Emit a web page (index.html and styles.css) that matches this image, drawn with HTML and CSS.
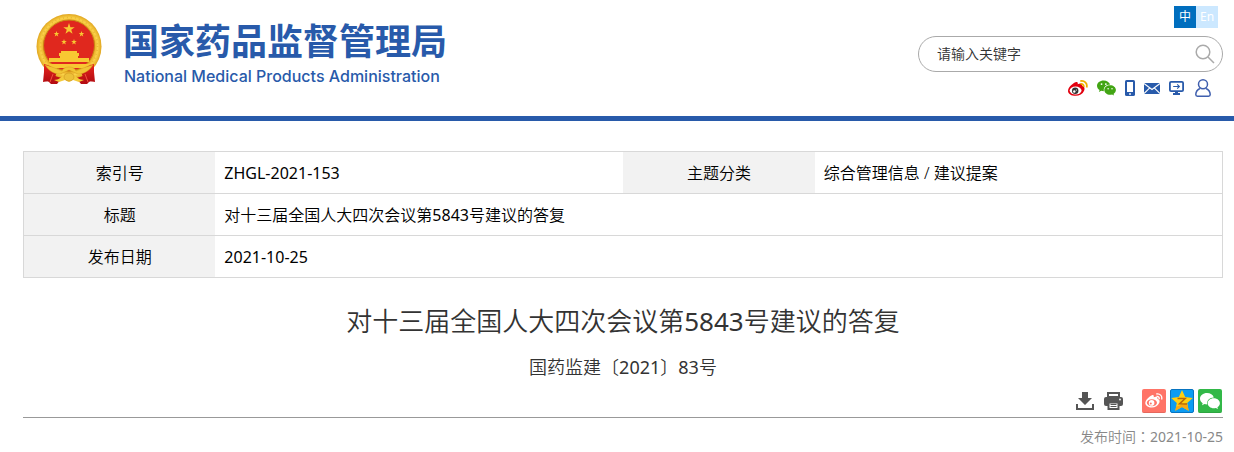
FILE: index.html
```html
<!DOCTYPE html>
<html lang="zh-CN">
<head>
<meta charset="utf-8">
<meta name="viewport" content="width=device-width, initial-scale=1">
<title>对十三届全国人大四次会议第5843号建议的答复</title>
<link rel="stylesheet" href="styles.css">
</head>
<body>
<svg class="defs" width="0" height="0" aria-hidden="true">
  <symbol id="star" viewBox="-10 -10 20 20"><path d="M0-10 2.3-3.1H9.5L3.7 1.2 5.9 8.1 0 3.8-5.9 8.1-3.7 1.2-9.5-3.1H-2.3Z"/></symbol>
  <symbol id="wechat" viewBox="0 0 20 16">
    <path d="M7 0C3.1 0 0 2.500 0 5.700c0 1.900 1 3.400 2.700 4.500L2 12.300l2.500-1.300c.9.300 1.700.4 2.700.4C6.600 7.300 9.400 4.500 13.800 4.400 13.100 1.800 10.300 0 7 0Z"/>
    <path d="M13.800 5.200c-3.400 0-6.100 2.200-6.100 5s2.700 5 6.100 5c.7 0 1.400-.1 2-.3l2.200 1.100-.6-1.800c1.500-.9 2.500-2.400 2.500-4 0-2.800-2.700-5-6.100-5Z"/>
    <g class="eyes"><circle cx="4.800" cy="3.900" r="1"/><circle cx="9.300" cy="3.900" r="1"/><circle cx="11.700" cy="8.700" r=".8"/><circle cx="15.800" cy="8.700" r=".8"/></g>
  </symbol>
</svg>

<header class="header">
  <a class="brand" href="#">
    <svg class="emblem" viewBox="0 0 66 70" role="img" aria-label="国徽">
      <defs>
        <radialGradient id="gold" cx=".5" cy=".5" r=".5"><stop offset=".76" stop-color="#e3a11c"/><stop offset=".88" stop-color="#fbd34a"/><stop offset="1" stop-color="#e0a51f"/></radialGradient>
        <linearGradient id="cloth" x1="0" y1="0" x2="0" y2="1"><stop offset="0" stop-color="#e8251d"/><stop offset="1" stop-color="#b30c12"/></linearGradient>
      </defs>
      <path d="M9 48 7 68l5-1 3 3h6l4-5h16l4 5h6l3-3 5 1-2-20Z" fill="url(#cloth)"/>
      <circle cx="33" cy="32.500" r="32.500" fill="url(#gold)"/>
      <circle cx="33" cy="32" r="28.500" fill="none" stroke="#d29318" stroke-width="1.500" stroke-dasharray="1 3" opacity=".4"/>
      <circle cx="33" cy="31.500" r="25.500" fill="#e0281e" stroke="#c98714"/>
      <g fill="#f8c832">
        <use href="#star" x="27" y="9" width="12" height="12"/>
        <use href="#star" x="17.500" y="17" width="6" height="6"/><use href="#star" x="42.500" y="17" width="6" height="6"/>
        <use href="#star" x="25" y="25" width="6" height="6"/><use href="#star" x="35" y="25" width="6" height="6"/>
        <path d="M25 37h16v2h2v3h-1v2h11v4H13v-4h11v-2h-1v-3h2Z"/>
        <path d="M12 50h42l-3 4H15Z"/>
      </g>
      <path d="M8 50c5 1 9 3 13 8l-4 10-9-1Zm50 0c-5 1-9 3-13 8l4 10 9-1Z" fill="url(#cloth)"/>
      <path d="M9 51c8 2 12 4 17 6 1-3 4-4 7-4s6 1 7 4c5-2 9-4 17-6-4 6-9 9-15 9l-9-4-9 4c-6 0-11-3-15-9Z" fill="#f1c434" stroke="#d79c20" stroke-width=".5"/>
      <path d="M18 66c5 0 7-3 10-5h10c3 2 5 5 10 5l-5 2-6-2-4 2-4-2-6 2Z" fill="#f4cb3c"/>
      <ellipse cx="33" cy="63" rx="5" ry="4" fill="#ecc039" stroke="#cf9420" stroke-width=".6"/>
      <path d="m17 60-3 8m35-8 3 8" stroke="#f25140"/>
    </svg>
    <span class="brand-text">
      <span class="brand-cn">国家药品监督管理局</span>
      <span class="brand-en">National Medical Products Administration</span>
    </span>
  </a>

  <div class="tools">
    <nav class="langs" aria-label="语言">
      <a class="lang lang-on" href="#">中</a><a class="lang" href="#">En</a>
    </nav>
    <form class="search">
      <input class="search-input" type="text" placeholder="请输入关键字" aria-label="请输入关键字">
      <button class="search-button" type="button" aria-label="搜索">
        <svg width="20" height="20" viewBox="0 0 20 20" fill="none" stroke="#aaa" stroke-width="1.500"><circle cx="8" cy="8" r="6.800"/><path d="m13 13 6 6"/></svg>
      </button>
    </form>
    <nav class="links" aria-label="快捷入口">
      <a href="#" aria-label="微博"><svg width="20" height="16" viewBox="0 0 20 16">
        <path d="M7.500 2.200C9 1.500 10.300 2 9.700 4.200c2.400-1 5-.9 4.400 1.600 2.600.8 2.900 3 2 4.900C14.700 14 11.500 15.800 7.600 15.800 3.500 15.800 0 13.900 0 10.900 0 7.500 4.300 3.500 7.500 2.200Z" fill="#e2000f"/>
        <ellipse cx="7.600" cy="10.500" rx="5.900" ry="4" fill="#fff"/><circle cx="7.200" cy="10.700" r="3.200" fill="#333"/><circle cx="6.300" cy="11.500" r="1.200" fill="#fff"/><circle cx="8.400" cy="10" r=".6" fill="#fff"/>
        <path d="M12.300 1.100c4-1 7.500 2.500 6.300 6.400M12.600 4c1.900-.4 3.600 1 3 3" fill="none" stroke="#eeb000" stroke-width="1.800"/></svg></a>
      <a href="#" aria-label="微信"><svg class="wechat-green" width="19" height="16"><use href="#wechat"/></svg></a>
      <a href="#" aria-label="手机版"><svg width="10" height="16" viewBox="0 0 10 16"><rect width="10" height="16" rx="1.600" fill="#285aaa"/><path d="M2 2h6v10H2Z" fill="#fff"/><circle cx="5" cy="14" r=".9" fill="#fff"/></svg></a>
      <a href="#" aria-label="邮箱"><svg width="16" height="11" viewBox="0 0 16 11"><path d="M0 0h16v11H0Z" fill="#285aaa"/><path d="m0 .5 8 6 8-6M0 10.500l5.500-5.300M16 10.500l-5.500-5.300" fill="none" stroke="#fff" stroke-width="1.100"/></svg></a>
      <a href="#" aria-label="电脑版"><svg width="15" height="14" viewBox="0 0 15 14"><rect x=".9" y=".9" width="13.200" height="9.200" rx="1.200" fill="#fff" stroke="#285aaa" stroke-width="1.800"/><path d="M6 10.500h3V12h2v2H4v-2h2Z" fill="#285aaa"/><path d="M4.200 5.500h6M8.200 3.300l2.200 2.200-2.200 2.200" fill="none" stroke="#285aaa" stroke-width="1.100"/></svg></a>
      <a class="link-user" href="#" aria-label="个人中心"><svg width="16" height="18" viewBox="0 0 16 18" fill="none" stroke="#3f5fae" stroke-width="1.500"><circle cx="8" cy="5.300" r="4.500"/><path d="M4.900 9.500C2.400 10.700.8 13 .8 15.600c0 1 .6 1.600 1.600 1.600h11.200c1 0 1.600-.6 1.600-1.600 0-2.600-1.600-4.900-4.100-6.100"/></svg></a>
    </nav>
  </div>
</header>

<main class="main">
  <table class="info">
    <colgroup><col class="col-key"><col class="col-value"><col class="col-key"><col class="col-value"></colgroup>
    <tbody>
      <tr><th scope="row">索引号</th><td><span class="num">ZHGL-2021-153</span></td><th scope="row">主题分类</th><td>综合管理信息 / 建议提案</td></tr>
      <tr><th scope="row">标题</th><td colspan="3">对十三届全国人大四次会议第<span class="num">5843</span>号建议的答复</td></tr>
      <tr><th scope="row">发布日期</th><td colspan="3"><span class="num">2021-10-25</span></td></tr>
    </tbody>
  </table>

  <h1 class="title">对十三届全国人大四次会议第<span class="num">5843</span>号建议的答复</h1>
  <p class="docno">国药监建〔<span class="num">2021</span>〕<span class="num">83</span>号</p>

  <div class="actions">
    <button class="action" type="button" aria-label="下载"><svg width="18" height="18" viewBox="0 0 18 18" fill="#555"><path d="M6 0h6v6h4l-7 7-7-7h4Z"/><path d="M0 12h2v4h14v-4h2v6H0Z"/></svg></button>
    <button class="action" type="button" aria-label="打印"><svg width="19" height="18" viewBox="0 0 19 18"><path d="M4 1h11v4H4Z" fill="#fff" stroke="#555" stroke-width="2"/><rect y="5" width="19" height="9" rx="2" fill="#555"/><path d="M4.500 10.500h10V17h-10Z" fill="#fff" stroke="#555" stroke-width="2"/><path d="M6.500 12.500h6M6.500 14.500h6" stroke="#555"/><circle cx="16" cy="7.500" r=".9" fill="#fff"/></svg></button>
    <div class="shares">
      <a class="share share-weibo" href="#" aria-label="分享到微博"><svg width="18" height="17" viewBox="0 0 18 17">
        <path d="M7 3.200c1.300-.6 2.200.2 1.700 2 2-.9 4.300-.7 3.700 1.500 2.300.7 2.600 2.600 1.800 4.300C13 13.700 10.200 15.500 6.800 15.500 3.200 15.500.3 13.700.3 11 .3 8 4.300 4.300 7 3.200Z" fill="#fff"/><ellipse cx="6.900" cy="10.700" rx="5.100" ry="3.500" fill="#ff7467"/><circle cx="6.600" cy="10.900" r="2.800" fill="#fff"/><circle cx="5.800" cy="11.500" r="1" fill="#ff7467"/>
        <path d="M11.300 2c3.600-.9 6.300 2.100 5.300 5.500M11.500 4.500c1.700-.3 3.100.9 2.600 2.700" fill="none" stroke="#fff" stroke-width="1.300"/></svg></a>
      <a class="share share-qzone" href="#" aria-label="分享到QQ空间"><svg width="22" height="22" viewBox="0 0 22 22"><path d="m11 0 3.200 7 7.600.9-5.600 5.200 1.500 7.700-6.700-3.800-6.700 3.800 1.500-7.700L.2 7.900 7.800 7Z" fill="#ffd012"/><path d="m7 16 9-3 1.700 7.800L11 17l-6.700 3.800.9-4.300Z" fill="#f8a814"/><path d="M6.500 8.600h7.700l-5.700 5.300 7.500.2" fill="none" stroke="#b96808" stroke-width="1.500"/></svg></a>
      <a class="share share-wechat" href="#" aria-label="分享到微信"><svg class="wechat-white" width="20" height="16"><use href="#wechat"/></svg></a>
    </div>
  </div>
  <p class="time">发布时间<span lang="zh-TW" class="colon">：</span><span class="num">2021-10-25</span></p>
</main>
</body>
</html>
```
FILE: styles.css
```css
* { box-sizing: border-box; }

body {
  margin: 0;
  background: #fff;
  color: #000;
  font-family: "Noto Sans", "Noto Sans CJK SC", sans-serif;
  font-size: 16px;
}

a { text-decoration: none; }
svg { display: block; }
.defs { position: absolute; }

button {
  padding: 0;
  border: 0;
  background: none;
  cursor: pointer;
}

/* Header */
.header {
  display: flex;
  justify-content: space-between;
  align-items: flex-start;
  padding: 6px 11px 19px 36px;
  border-bottom: 5px solid #285aaa;
}

.brand {
  display: flex;
  gap: 21px;
  padding-top: 8px;
  color: #285aaa;
}

.emblem {
  width: 66px;
  height: 70px;
}

.brand-text {
  display: flex;
  flex-direction: column;
  padding-top: 1px;
  white-space: nowrap;
}

.brand-cn {
  font: 700 36px/48px "Noto Sans CJK SC", sans-serif;
}

.brand-en {
  padding-left: 1px;
  font: 500 16px/26px Inter, sans-serif;
}

.tools {
  display: flex;
  flex-direction: column;
  align-items: flex-end;
}

.langs {
  display: flex;
  padding-right: 5px;
}

.lang {
  width: 22px;
  background: #cce8ff;
  color: #fff;
  font-size: 12px;
  line-height: 22px;
  text-align: center;
}

.lang-on { background: #006ebe; }

.search {
  display: flex;
  align-items: center;
  width: 305px;
  height: 36px;
  margin-top: 8px;
  padding: 0 7px 0 18px;
  border: 1px solid #aaa;
  border-radius: 18px;
}

.search-input {
  flex: 1;
  min-width: 0;
  padding: 0;
  border: 0;
  outline: 0;
  background: none;
  color: #333;
  font: 350 14px/20px "Noto Sans", "Noto Sans CJK SC", sans-serif;
}

.search-input::placeholder { color: #333; opacity: 1; }

.links {
  display: flex;
  align-items: center;
  gap: 9px;
  padding: 7px 12px 0 0;
}

.link-user { padding-left: 2px; }

.wechat-green { fill: #42a514; }
.wechat-white { fill: #fff; }
.eyes { fill: #fff; }
.share .eyes { fill: #32b848; }

/* Document details */
.main {
  padding: 30px 11px 0 23px;
  font-weight: 350;
}

.num { font-weight: 400; }

.info {
  width: 100%;
  border: 1px solid #d8d8d8;
  border-collapse: collapse;
  table-layout: fixed;
}

.col-key { width: 16%; }
.col-value { width: 34%; }

.info th,
.info td {
  height: 42px;
  padding: 0 9px;
  border-top: 1px solid #d8d8d8;
  font-weight: 350;
  line-height: 24px;
  text-align: left;
}

.info th {
  background: #f2f2f2;
  text-align: center;
}

.title {
  margin: 23px 0 0;
  color: #333;
  font-size: 26px;
  font-weight: 350;
  line-height: 40px;
  text-align: center;
}

.docno {
  margin: 12px 0 0;
  color: #333;
  font-size: 18px;
  line-height: 28px;
  text-align: center;
}

.actions {
  display: flex;
  justify-content: flex-end;
  align-items: center;
  gap: 10px;
  padding: 8px 1px 4px 0;
  border-bottom: 1px solid #999;
}

.shares {
  display: flex;
  gap: 4px;
  padding-left: 9px;
}

.share {
  display: grid;
  place-items: center;
  width: 24px;
  height: 24px;
  border-radius: 2px;
}

.share-weibo { background: #ff7467; border-bottom: 1px solid #e5685d; }
.share-qzone { background: #0c9cf3; border: 1px solid #0874c0; }
.share-wechat { background: #32b848; border-bottom: 1px solid #2da541; }

.time {
  margin: 8px 0 0;
  color: #888;
  font-size: 14px;
  line-height: 20px;
  text-align: right;
}

.colon { font-family: "Noto Sans CJK TC", sans-serif; }
```
